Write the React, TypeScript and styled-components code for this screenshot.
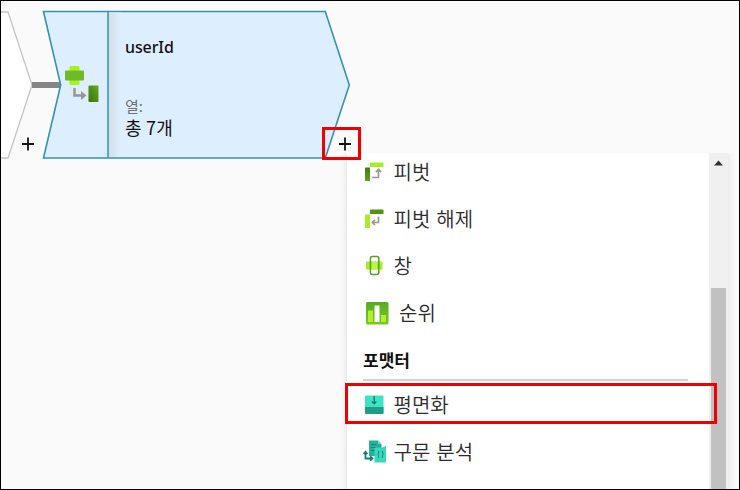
import React from "react";
import styled, { createGlobalStyle } from "styled-components";

const GlobalStyle = createGlobalStyle`
  * { box-sizing: border-box; }
  body { margin: 0; }
`;

const Canvas = styled.main`
  position: relative;
  width: 740px;
  height: 490px;
  overflow: hidden;
  background: #fafafa;
  color: #111;
  font-family: "Noto Sans", "Noto Sans CJK KR", sans-serif;
  &::after {
    content: "";
    position: absolute;
    inset: 0;
    border: 1px solid #000;
    pointer-events: none;
  }
`;

const FlowShapes = styled.svg`
  position: absolute;
  left: 0;
  top: 0;
`;

const NodeBody = styled.section`
  position: absolute;
  left: 125px;
  top: 35px;
  display: flex;
  flex-direction: column;
`;

const NodeTitle = styled.div`
  height: 61px;
  font-size: 16px;
  font-weight: 500;
  line-height: 24px;
  letter-spacing: -0.1px;
`;

const NodeLabel = styled.div`
  font: 15px/20px "Noto Sans CJK KR", sans-serif;
  color: #707070;
`;

const NodeValue = styled.div`
  font: 18px/23px "Noto Sans CJK KR", sans-serif;
  letter-spacing: 0.2px;
`;

const AddButton = styled.button<{ $x: number }>`
  position: absolute;
  left: ${(p) => p.$x}px;
  top: 137px;
  width: 14px;
  height: 14px;
  padding: 0;
  border: 0;
  background: none;
  svg { display: block; }
`;

const Menu = styled.div`
  position: absolute;
  left: 347px;
  top: 153px;
  width: 381px;
  height: 345px;
  display: flex;
  background: #fff;
  box-shadow: 0 1px 7px rgba(0, 0, 0, 0.13);
  clip-path: inset(0 -10px 0 -10px);
`;

const MenuList = styled.div`
  flex: 1;
  display: flex;
  flex-direction: column;
  padding: 0 21px 0 16px;
  margin-top: -5px;
`;

const MenuItem = styled.div<{ $gap?: number }>`
  display: flex;
  align-items: center;
  gap: ${(p) => p.$gap ?? 3.5}px;
  height: 47px;
  flex: none;
  font: 20px/28px "Noto Sans CJK KR", sans-serif;
  font-weight: 350;
  word-spacing: 1.5px;
  color: #2b2b2b;
  white-space: nowrap;
  svg { flex: none; }
`;

const GroupTitle = styled.div`
  height: 45px;
  flex: none;
  padding-top: 12px;
  border-bottom: 2px solid #d3d3d3;
  font: bold 17px/24px "Noto Sans CJK KR", sans-serif;
`;

const ScrollTrack = styled.div`
  width: 19px;
  display: flex;
  flex-direction: column;
  align-items: center;
  background: #f0f0f0;
  svg { display: block; margin-top: 7px; }
`;

const ScrollThumb = styled.div`
  width: 15px;
  flex: 1;
  margin-top: 122px;
  background: #c1c1c1;
`;

const Highlight = styled.div<{ $x: number; $y: number; $w: number; $h: number }>`
  position: absolute;
  left: ${(p) => p.$x}px;
  top: ${(p) => p.$y}px;
  width: ${(p) => p.$w}px;
  height: ${(p) => p.$h}px;
  border: 3px solid #f00000;
`;

const Plus = () => (
  <svg width="14" height="14">
    <path d="M1 7H13M7 .5V13.5" stroke="#111" strokeWidth="1.8" />
  </svg>
);

const PivotIcon = ({ unpivot = false }: { unpivot?: boolean }) => (
  <svg width="27" height="24" viewBox="0 0 27 24">
    <defs>
      <linearGradient id="pivotDark" x2="0" y2="1">
        <stop stopColor="#3d7d0a" />
        <stop offset="1" stopColor="#5ea31c" />
      </linearGradient>
    </defs>
    <rect x="7" y="2.5" width="13.5" height="4.5" rx=".5" fill={unpivot ? "#4f9410" : "#a6ee25"} />
    <rect x="2" y="7.5" width="5" height="13.5" rx=".5" fill={unpivot ? "#a6ee25" : "url(#pivotDark)"} />
    {unpivot ? (
      <path d="M15.5 9.5V15.5H9.5M12 12.8L9.3 15.5L12 18.2" fill="none" stroke="#999" strokeWidth="1.7" />
    ) : (
      <path d="M9 17.5H15.5V10M12.8 12.2L15.5 9.5L18.2 12.2" fill="none" stroke="#999" strokeWidth="1.7" />
    )}
  </svg>
);

const WindowIcon = () => (
  <svg width="27" height="24" viewBox="0 0 27 24">
    <rect x="3" y="7.5" width="16.5" height="8" rx=".5" fill="#a6ee25" />
    <path d="M9 7.5H14.2V15.5H9Z" fill="#b9f447" />
    <rect x="7.4" y="2.5" width="8.4" height="18" rx="2" fill="none" stroke="#5a9e2a" strokeWidth="1.5" />
  </svg>
);

const RankIcon = () => (
  <svg width="27" height="24" viewBox="0 0 27 24">
    <defs>
      <linearGradient id="rank" x2="0" y2="1">
        <stop stopColor="#56ab20" />
        <stop offset="1" stopColor="#7bc727" />
      </linearGradient>
    </defs>
    <rect x="3" y="1" width="22.5" height="22.5" rx="1.5" fill="url(#rank)" />
    <path d="M5 9.5H10V21H5ZM18 14H23V21H18Z" fill="#b2f02b" />
    <path d="M11.5 4.5H16.5V21H11.5Z" fill="#fff" />
  </svg>
);

const FlattenIcon = () => (
  <svg width="27" height="24" viewBox="0 0 27 24">
    <rect x="2" y="2.5" width="18.5" height="18.5" rx="1" fill="#3ee4c2" />
    <path d="M2 14H20.5V20Q20.5 21 19.5 21H3Q2 21 2 20Z" fill="#1d9c88" />
    <path d="M11.2 3V10.5M9 8.5L11.2 10.8L13.4 8.5" fill="none" stroke="#187f75" strokeWidth="1.4" />
  </svg>
);

const ParseIcon = () => (
  <svg width="27" height="24" viewBox="0 0 27 24">
    <path d="M6 .5H15L18.5 4V16H6Z" fill="#23b19b" />
    <path d="M15 .5V4H18.5Z" fill="#72ddcb" />
    <path d="M8 4.5H13M8 7.5H13M8 10.5H12" stroke="#168878" />
    <path d="M11.5 8.5Q11.5 7.5 12.5 7.5H19.5L23 5.8V22.5H11.5Z" fill="#39d8bb" />
    <path d="M15.8 11Q14.4 14.5 15.8 18M19.3 11Q20.7 14.5 19.3 18" fill="none" stroke="#178d7d" strokeWidth="1.2" />
    <path d="M2.5 12V18.5H9M.5 14L2.5 11.8L4.5 14M7.2 16.3L9.5 18.5L7.2 20.7" fill="none" stroke="#157f72" strokeWidth="1.8" />
  </svg>
);

export default function App() {
  return (
    <>
      <GlobalStyle />
      <Canvas>
        <FlowShapes width="370" height="170" viewBox="0 0 370 170">
          <defs>
            <linearGradient id="fold">
              <stop stopColor="#d5dfe7" />
              <stop offset="1" stopColor="#ddefff" />
            </linearGradient>
            <linearGradient id="output" x1="1" y1="0" x2="0" y2="1">
              <stop stopColor="#64a91e" />
              <stop offset="1" stopColor="#39740b" />
            </linearGradient>
          </defs>
          <path d="M-2 12H8L32 85L8 158H-2Z" fill="#fff" stroke="#c4c4c4" strokeWidth="1.3" />
          <path d="M32 85H61" stroke="#858585" strokeWidth="6" />
          <path d="M43.5 11.5H325.3L349.3 85L325.3 158H43.5L60.7 85Z" fill="#ddefff" stroke="#3591b1" strokeWidth="1.6" />
          <path d="M109 12.5H121V157H109Z" fill="url(#fold)" />
          <path d="M108 12V158" stroke="#4b9fbc" strokeWidth="1.8" />
          <rect x="69.5" y="66" width="10" height="19" rx="1.5" fill="#a7f122" />
          <rect x="65" y="70.5" width="19" height="10" rx="1" fill="#70b928" />
          <path d="M74.5 88V95.5H82" fill="none" stroke="#969696" strokeWidth="2.5" />
          <path d="M81 91L86.5 95.5L81 100Z" fill="#969696" />
          <rect x="88.5" y="85.5" width="10" height="16.5" rx="1" fill="url(#output)" />
        </FlowShapes>
        <NodeBody>
          <NodeTitle>userId</NodeTitle>
          <NodeLabel>열:</NodeLabel>
          <NodeValue>총 7개</NodeValue>
        </NodeBody>
        <AddButton $x={21} aria-label="추가"><Plus /></AddButton>
        <Menu>
          <MenuList>
            <MenuItem><PivotIcon />피벗</MenuItem>
            <MenuItem><PivotIcon unpivot />피벗 해제</MenuItem>
            <MenuItem><WindowIcon />창</MenuItem>
            <MenuItem $gap={9}><RankIcon />순위</MenuItem>
            <GroupTitle>포맷터</GroupTitle>
            <MenuItem><FlattenIcon />평면화</MenuItem>
            <MenuItem><ParseIcon />구문 분석</MenuItem>
          </MenuList>
          <ScrollTrack>
            <svg width="9" height="6"><path d="M0 5.5L4.5 .5L9 5.5Z" fill="#333" /></svg>
            <ScrollThumb />
          </ScrollTrack>
        </Menu>
        <AddButton $x={338} aria-label="추가"><Plus /></AddButton>
        <Highlight $x={322} $y={127} $w={39} $h={33} />
        <Highlight $x={345} $y={383} $w={372} $h={41} />
      </Canvas>
    </>
  );
}
